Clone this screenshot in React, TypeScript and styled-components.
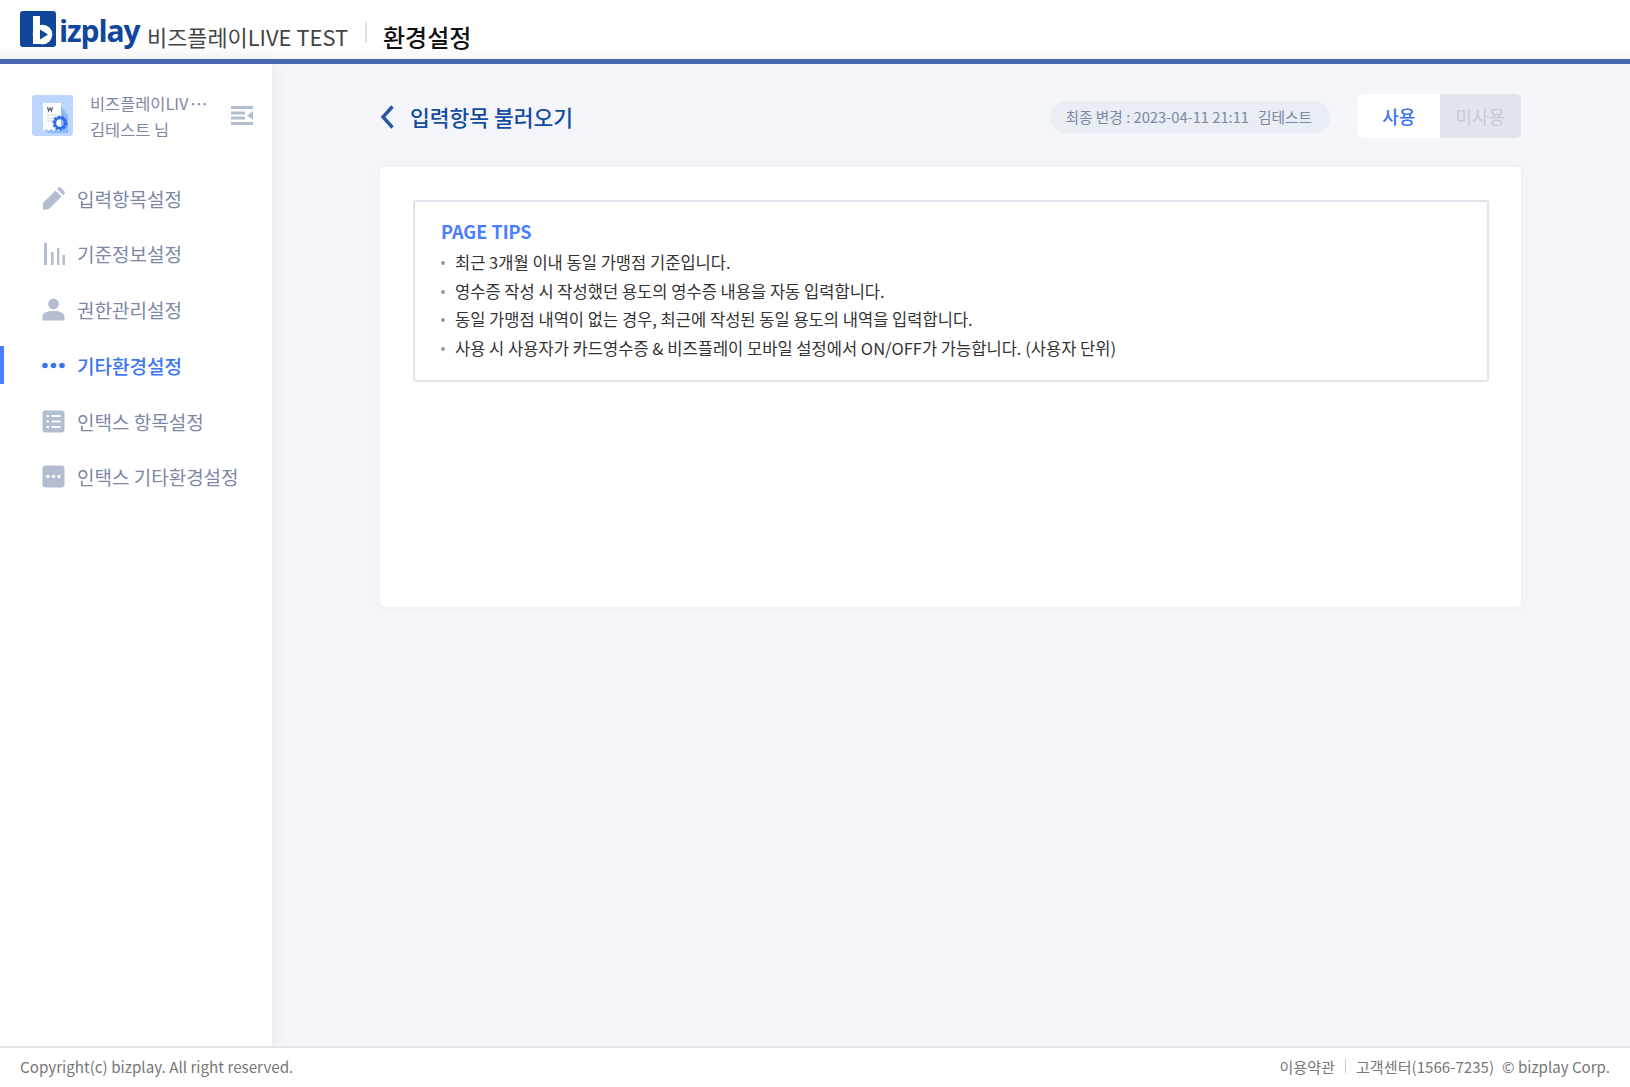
import React from 'react';
import styled, { createGlobalStyle } from 'styled-components';

const GlobalStyle = createGlobalStyle`
  html, body {
    margin: 0;
    padding: 0;
    height: 100%;
    background: #f4f6fb;
  }
  body {
    font-family: "Noto Sans CJK KR", "Noto Sans", sans-serif;
    overflow: hidden;
  }
`;

const Page = styled.div`
  display: flex;
  flex-direction: column;
  height: 1087px;
`;

const Header = styled.header`
  display: flex;
  align-items: flex-start;
  height: 59px;
  flex: none;
  padding-left: 20px;
  background: linear-gradient(#fff 75%, #f7f7f7 100%);
  border-bottom: 5px solid #4a69b1;
`;

const Logo = styled.div`
  display: flex;
  align-items: flex-start;
  margin-top: 11px;
  width: 127px;
`;

const LogoWord = styled.span`
  margin: 1px 0 0 3px;
  font-family: "Open Sans", "Liberation Sans", sans-serif;
  font-size: 30px;
  font-weight: 700;
  line-height: 38px;
  letter-spacing: -1.1px;
  color: #10479c;
`;

const CompanyName = styled.span`
  font-size: 21.9px;
  line-height: 32px;
  margin-top: 21px;
  color: #444;
  width: 218px;
  white-space: nowrap;
`;

const TitleDivider = styled.span`
  width: 2px;
  height: 21px;
  margin-top: 22px;
  margin-right: 16px;
  background: #e2e2e2;
`;

const PageName = styled.span`
  font-size: 24px;
  line-height: 32px;
  margin-top: 21px;
  font-weight: 500;
  color: #111;
`;

const Body = styled.div`
  display: flex;
  flex: 1;
  min-height: 0;
`;

const Sidebar = styled.aside`
  width: 272px;
  flex: none;
  background: #fff;
  box-shadow: 0 0 14px rgba(60, 70, 100, 0.1);
  z-index: 1;
`;

const Profile = styled.div`
  display: flex;
  align-items: center;
  padding: 24.5px 18px 0 32px;
`;

const ProfileText = styled.div`
  width: 118px;
  margin: 1px 0 0 17px;
  font-size: 16.4px;
  line-height: 26px;
  color: #7c88a6;
  white-space: nowrap;
`;

const MoreDots = styled.span`
  letter-spacing: -3.4px;
`;

const CollapseButton = styled.div`
  display: flex;
  margin-left: 23px;
`;

const Menu = styled.nav`
  display: flex;
  flex-direction: column;
  margin-top: 37.5px;
`;

const MenuItem = styled.div<{ $active?: boolean }>`
  display: flex;
  align-items: center;
  gap: 12px;
  height: 38px;
  margin-bottom: 17.8px;
  padding-left: ${(p) => (p.$active ? '38px' : '42px')};
  border-left: ${(p) => (p.$active ? '4px solid #4a7dff' : 'none')};
  font-size: 19px;
  font-weight: ${(p) => (p.$active ? 500 : 400)};
  color: ${(p) => (p.$active ? '#3b75f5' : '#7c88a6')};
`;

const MenuIcon = styled.svg`
  width: 23px;
  height: 23px;
  flex: none;
`;

const Main = styled.main`
  flex: 1;
  padding: 30px 109px 0 108px;
`;

const TopRow = styled.div`
  display: flex;
  align-items: flex-start;
  height: 45px;
`;

const BackLink = styled.div`
  display: flex;
  margin: 10px 15px 0 0;
`;

const Title = styled.h1`
  flex: 1;
  margin: 7px 0 0;
  font-size: 21.5px;
  line-height: 32px;
  font-weight: 500;
  color: #154ba3;
`;

const ChangeInfo = styled.div`
  display: flex;
  align-items: center;
  gap: 9px;
  height: 32px;
  box-sizing: border-box;
  margin: 7px 28px 0 0;
  padding: 0 18px 2px 16px;
  border-radius: 16px;
  background: #e9edf4;
  font-size: 14.7px;
  color: #7c88a6;
  white-space: nowrap;
`;

const Toggle = styled.div`
  display: flex;
  border-radius: 5px;
  overflow: hidden;
`;

const ToggleOption = styled.div<{ $on?: boolean }>`
  display: flex;
  align-items: center;
  justify-content: center;
  width: 81.5px;
  height: 44px;
  font-size: 18px;
  font-weight: ${(p) => (p.$on ? 500 : 400)};
  background: ${(p) => (p.$on ? '#fff' : '#e2e5ec')};
  color: ${(p) => (p.$on ? '#3b75f5' : '#c6cbd8')};
`;

const Card = styled.section`
  height: 440px;
  margin-top: 28px;
  padding: 33px 32px 33px 33px;
  box-sizing: border-box;
  border-radius: 5px;
  background: #fff;
  box-shadow: 0 0 10px rgba(60, 70, 100, 0.05);
`;

const Tips = styled.div`
  height: 182px;
  box-sizing: border-box;
  padding: 17px 26px;
  border: 2px solid #dfe5ea;
  border-radius: 3px;
`;

const TipsTitle = styled.h2`
  margin: 0;
  font-size: 18px;
  line-height: 24px;
  font-weight: 700;
  color: #4a7dff;
`;

const TipsList = styled.ul`
  list-style: none;
  margin: 5px 0 0;
  padding: 0;
`;

const Tip = styled.li`
  position: relative;
  padding-left: 14px;
  font-size: 16.55px;
  line-height: 28.6px;
  color: #333;

  &::before {
    content: '';
    position: absolute;
    left: 0;
    top: 13px;
    width: 4px;
    height: 4px;
    border-radius: 50%;
    background: #999;
  }
`;

const Footer = styled.footer`
  display: flex;
  align-items: center;
  justify-content: space-between;
  flex: none;
  height: 41px;
  padding: 0 20px 3px;
  background: #fff;
  border-top: 2px solid #e3e4e8;
  box-sizing: border-box;
  font-size: 15.2px;
  color: #777;
  z-index: 2;
`;

const FooterLinks = styled.div`
  display: flex;
  align-items: center;
  font-size: 15.1px;
`;

const FooterDivider = styled.span`
  width: 1px;
  height: 14px;
  margin: 0 10px;
  background: #ccc;
`;

const FooterCopy = styled.span`
  margin-left: 8px;
`;

const BizLogoMark = () => (
  <svg width="36" height="36" viewBox="0 0 36 36">
    <rect width="36" height="36" rx="3" fill="#10479c" />
    <rect x="13" y="5" width="7" height="28" fill="#fff" />
    <circle cx="22.5" cy="23.5" r="9.8" fill="#fff" />
    <path d="M20 18.5 L28 23.5 L20 28.5 Z" fill="#10479c" />
  </svg>
);

const ReceiptIcon = () => (
  <svg width="41" height="41" viewBox="0 0 41 41">
    <rect width="41" height="41" rx="3" fill="#bcd6fd" />
    <path d="M28 10 L36 20 V38 H16 L10 30 Z" fill="#8db8fb" />
    <path d="M11 8 H29 V34 L26.5 36 L24 34 L21.5 36 L19 34 L16.5 36 L14 34 L11 36 Z" fill="#fff" />
    <path d="M15.5 12 L16.5 16 L18 13 L19.5 16 L20.5 12" fill="none" stroke="#55627f" strokeWidth="1.2" />
    <path d="M15 20 H25 M15 23 H25 M15 26 H21" stroke="#c9d6ea" strokeWidth="1.2" />
    <circle cx="28" cy="28" r="6" fill="none" stroke="#2f6cf0" strokeWidth="3" strokeDasharray="2.6 1" />
    <circle cx="28" cy="28" r="5" fill="none" stroke="#2f6cf0" strokeWidth="2.4" />
  </svg>
);

const CollapseIcon = () => (
  <svg width="22" height="19" viewBox="0 0 22 19" fill="#b4bccf">
    <rect width="22" height="3" />
    <rect y="5.5" width="14" height="3" />
    <rect y="10.5" width="14" height="3" />
    <rect y="16" width="22" height="3" />
    <path d="M22 5 V14 L16 9.5 Z" />
  </svg>
);

const PencilIcon = () => (
  <MenuIcon viewBox="0 0 23 23" fill="#b4bccf">
    <path d="M1 16 L13.5 3.5 L19.5 9.5 L7 22 L1 23 Z" />
    <path d="M15 2 L16.6 0.5 C17.2 0 18 0 18.6 0.5 L22.5 4.4 C23 5 23 5.8 22.5 6.4 L21 8 Z" />
  </MenuIcon>
);

const BarsIcon = () => (
  <MenuIcon viewBox="0 0 23 23" fill="#b4bccf">
    <rect x="2" y="1" width="3" height="22" />
    <rect x="9" y="10" width="2.6" height="13" />
    <rect x="15" y="6" width="2.4" height="17" />
    <rect x="20.4" y="13" width="2.6" height="10" />
  </MenuIcon>
);

const UserIcon = () => (
  <MenuIcon viewBox="0 0 23 23" fill="#b4bccf">
    <circle cx="11.5" cy="6" r="5.4" />
    <path d="M0.5 22.5 V18.5 C0.5 15 5 13 11.5 13 C18 13 22.5 15 22.5 18.5 V22.5 Z" />
  </MenuIcon>
);

const DotsIcon = () => (
  <MenuIcon viewBox="0 0 23 23" fill="#3b75f5">
    <circle cx="3" cy="11.5" r="2.8" />
    <circle cx="11.5" cy="11.5" r="2.8" />
    <circle cx="20" cy="11.5" r="2.8" />
  </MenuIcon>
);

const ListBoxIcon = () => (
  <MenuIcon viewBox="0 0 23 23">
    <rect width="22" height="22" x="0.5" y="0.5" rx="3" fill="#b4bccf" />
    <path d="M4.5 6 H7 M4.5 11.5 H7 M4.5 17 H7 M9.5 6 H18.5 M9.5 11.5 H18.5 M9.5 17 H18.5" stroke="#fff" strokeWidth="2" />
  </MenuIcon>
);

const DotsBoxIcon = () => (
  <MenuIcon viewBox="0 0 23 23">
    <rect width="22" height="22" x="0.5" y="0.5" rx="3" fill="#b4bccf" />
    <circle cx="6" cy="11.5" r="1.8" fill="#fff" />
    <circle cx="11.5" cy="11.5" r="1.8" fill="#fff" />
    <circle cx="17" cy="11.5" r="1.8" fill="#fff" />
  </MenuIcon>
);

const BackIcon = () => (
  <svg width="15" height="26" viewBox="0 0 15 26">
    <path d="M12.5 2.5 L3 13 L12.5 23.5" fill="none" stroke="#2a569f" strokeWidth="3.4" />
  </svg>
);

const menuItems = [
  { label: '입력항목설정', icon: <PencilIcon /> },
  { label: '기준정보설정', icon: <BarsIcon /> },
  { label: '권한관리설정', icon: <UserIcon /> },
  { label: '기타환경설정', icon: <DotsIcon />, active: true },
  { label: '인택스 항목설정', icon: <ListBoxIcon /> },
  { label: '인택스 기타환경설정', icon: <DotsBoxIcon /> },
];

const tips = [
  '최근 3개월 이내 동일 가맹점 기준입니다.',
  '영수증 작성 시 작성했던 용도의 영수증 내용을 자동 입력합니다.',
  '동일 가맹점 내역이 없는 경우, 최근에 작성된 동일 용도의 내역을 입력합니다.',
  '사용 시 사용자가 카드영수증 & 비즈플레이 모바일 설정에서 ON/OFF가 가능합니다. (사용자 단위)',
];

const App: React.FC = () => {
  return (
    <Page>
      <GlobalStyle />
      <Header>
        <Logo>
          <BizLogoMark />
          <LogoWord>izplay</LogoWord>
        </Logo>
        <CompanyName>비즈플레이LIVE TEST</CompanyName>
        <TitleDivider />
        <PageName>환경설정</PageName>
      </Header>

      <Body>
        <Sidebar>
          <Profile>
            <ReceiptIcon />
            <ProfileText>
              <div>
                비즈플레이LIV<MoreDots>···</MoreDots>
              </div>
              <div>김테스트 님</div>
            </ProfileText>
            <CollapseButton>
              <CollapseIcon />
            </CollapseButton>
          </Profile>
          <Menu>
            {menuItems.map((item) => (
              <MenuItem key={item.label} $active={item.active}>
                {item.icon}
                {item.label}
              </MenuItem>
            ))}
          </Menu>
        </Sidebar>

        <Main>
          <TopRow>
            <BackLink>
              <BackIcon />
            </BackLink>
            <Title>입력항목 불러오기</Title>
            <ChangeInfo>
              <span>최종 변경 : 2023-04-11 21:11</span>
              <span>김테스트</span>
            </ChangeInfo>
            <Toggle>
              <ToggleOption $on>사용</ToggleOption>
              <ToggleOption>미사용</ToggleOption>
            </Toggle>
          </TopRow>

          <Card>
            <Tips>
              <TipsTitle>PAGE TIPS</TipsTitle>
              <TipsList>
                {tips.map((tip) => (
                  <Tip key={tip}>{tip}</Tip>
                ))}
              </TipsList>
            </Tips>
          </Card>
        </Main>
      </Body>

      <Footer>
        <span>Copyright(c) bizplay. All right reserved.</span>
        <FooterLinks>
          <span>이용약관</span>
          <FooterDivider />
          <span>고객센터(1566-7235)</span>
          <FooterCopy>© bizplay Corp.</FooterCopy>
        </FooterLinks>
      </Footer>
    </Page>
  );
};

export default App;
